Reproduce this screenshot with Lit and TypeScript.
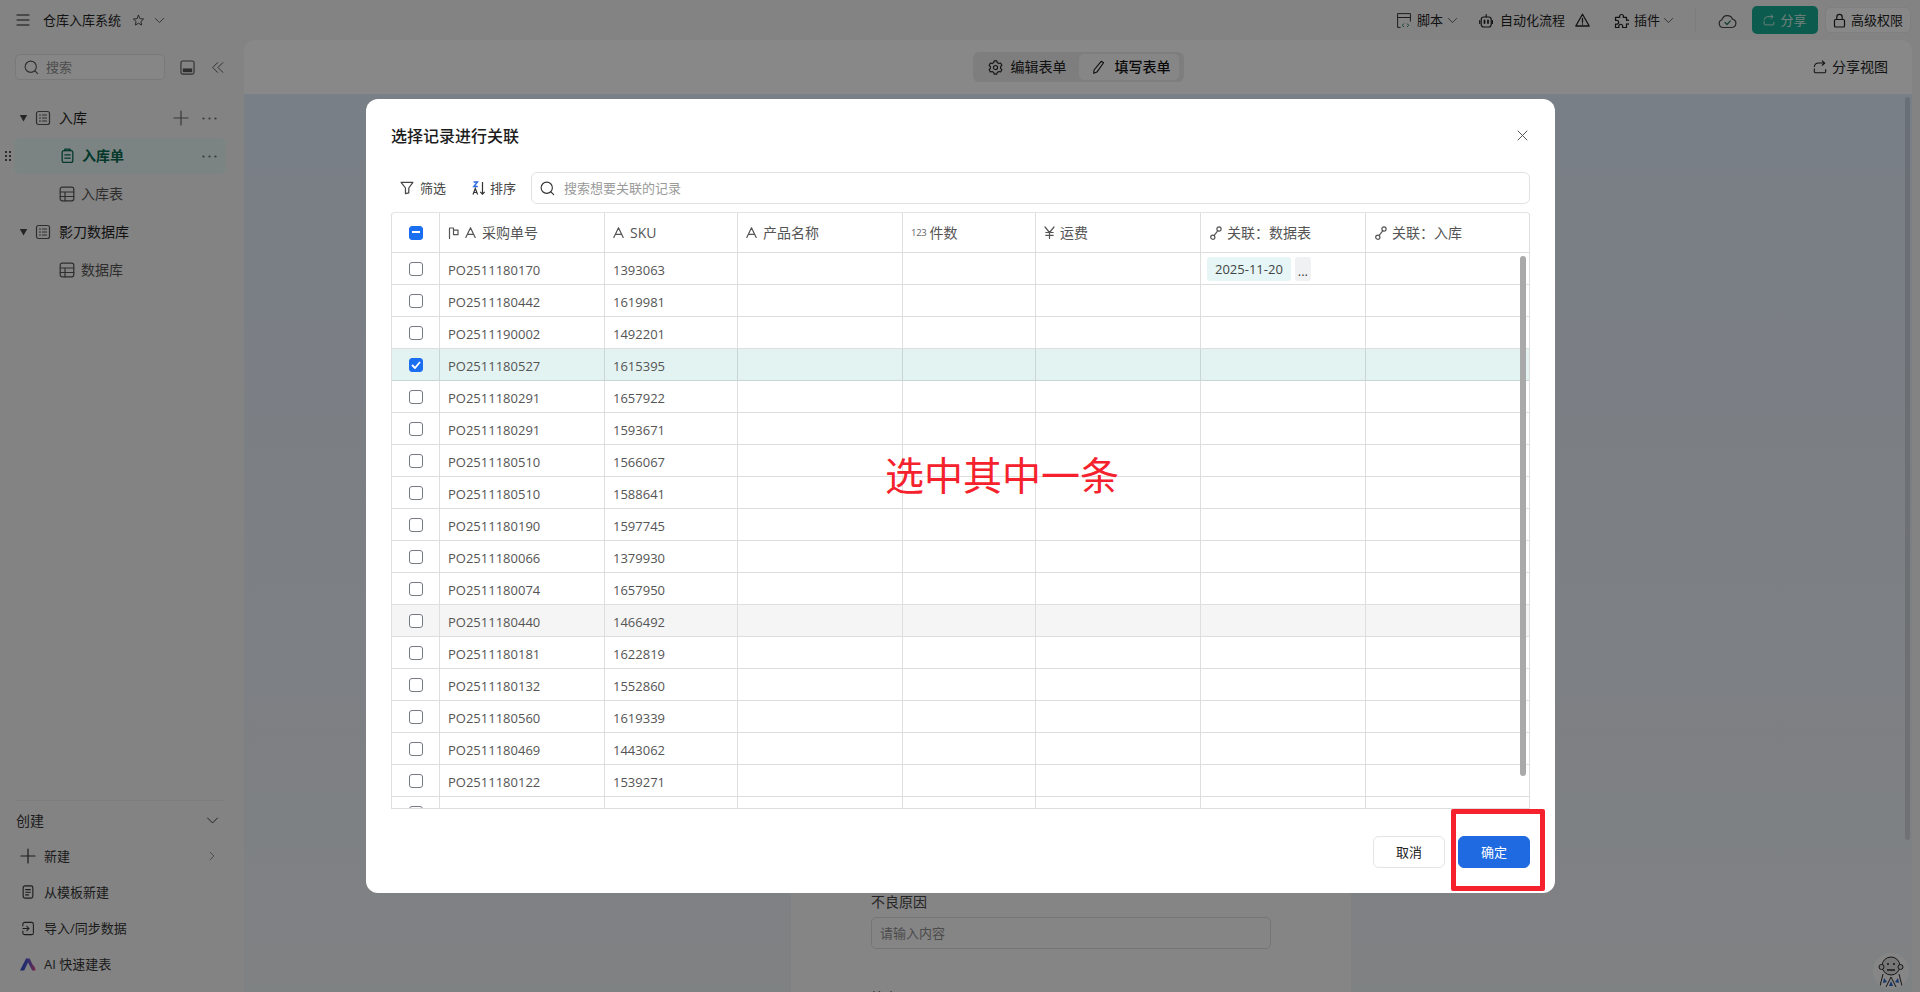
import { LitElement, html, svg, css } from "lit";
import { customElement } from "lit/decorators.js";

const ic = (w: number, h: number, body: unknown, vb = "0 0 16 16") =>
  html`<svg class="ic" width=${w} height=${h} viewBox=${vb} fill="none" stroke="currentColor" stroke-width="1.2" stroke-linecap="round" stroke-linejoin="round">${body}</svg>`;

const gearPath = (() => {
  const pts: string[] = [];
  const teeth = 6;
  for (let i = 0; i < teeth; i++) {
    const a = (i * Math.PI * 2) / teeth - Math.PI / 2;
    const step = Math.PI / teeth;
    const p = (r: number, t: number) => `${(8 + r * Math.cos(t)).toFixed(2)} ${(8 + r * Math.sin(t)).toFixed(2)}`;
    pts.push(p(7.2, a - step * 0.38), p(7.2, a + step * 0.38), p(5.6, a + step * 0.62), p(5.6, a + step * 1.38));
  }
  return `M${pts.join("L")}z`;
})();

const I = {
  menu: () => ic(14, 12, svg`<path d="M1 1h12M1 6h12M1 11h12" />`, "0 0 14 12"),
  star: () => ic(13, 13, svg`<path d="M8 1.6l1.9 4.1 4.4.5-3.3 3 .9 4.4L8 11.4l-3.9 2.2.9-4.400-3.300-3 4.400-.5z" />`),
  chevD: (s = 11) => ic(s, s, svg`<path d="M2 5l6 6 6-6" />`),
  chevR: () => ic(10, 10, svg`<path d="M5 2l6 6-6 6" />`),
  search: (s = 15) => ic(s, s, svg`<circle cx="7.2" cy="7.2" r="6" /><path d="M11.6 11.6l3 3" />`),
  panel: () => ic(15, 15, svg`<rect x="1" y="1" width="14" height="14" rx="2" /><rect x="3" y="9" width="10" height="4" fill="currentColor" stroke="none" />`),
  collapse: () => ic(14, 13, svg`<path d="M7.5 2L1.5 8l6 6M14 2L8 8l6 6" />`),
  tri: () => html`<svg class="ic" width="9" height="8" viewBox="0 0 9 8"><path d="M.8 1h7.4L4.5 7.4z" fill="#444" /></svg>`,
  doc: () => ic(16, 16, svg`<rect x="1.5" y="1.5" width="13" height="13" rx="2" /><path d="M4.5 5h1M7.5 5h4M4.5 8h1M7.5 8h4M4.5 11h1M7.5 11h4" />`),
  plus: () => ic(16, 16, svg`<path d="M8 1v14M1 8h14" />`),
  dots: () => html`<svg class="ic" width="15" height="3" viewBox="0 0 15 3" fill="currentColor"><circle cx="1.5" cy="1.5" r="1.1" /><circle cx="7.5" cy="1.5" r="1.1" /><circle cx="13.5" cy="1.5" r="1.1" /></svg>`,
  clip: () => ic(13, 16, svg`<rect x="1" y="2.5" width="10" height="11" rx="1.8" /><path d="M3.5 2.5V1h5v1.5M3.5 6.5h5M3.5 9.5h5" />`, "0 0 12 15"),
  grid: () => ic(16, 16, svg`<rect x="1.2" y="1.2" width="13.6" height="13.6" rx="2" /><path d="M1.2 6h13.6M1.2 10.500h13.600M6 6v8.800" />`),
  tpl: () => ic(12, 14, svg`<rect x=".8" y="1" width="10.4" height="13" rx="2" /><path d="M3.5 5h5M3.5 7.8h5M3.5 10.6h3" />`, "0 0 12 15"),
  imp: () => ic(14, 15, svg`<path d="M1 5V3a2 2 0 012-2h8a2 2 0 012 2v10a2 2 0 01-2 2H3a2 2 0 01-2-2v-2M1 8h7M5.500 5.500L8 8l-2.500 2.500" />`),
  ai: () => html`<svg class="ic" width="16" height="13" viewBox="0 0 16 13"><defs><linearGradient id="aig" x1="0" x2="1" y1="0" y2="0"><stop offset="0" stop-color="#2f49c8" /><stop offset=".55" stop-color="#5a55c9" /><stop offset="1" stop-color="#e0477e" /></linearGradient></defs><path d="M0 12.6L6 .6h3.6L13 7.2c1.3.4 2.3 2.4 2.6 5.4h-3.4L8 4.6 4.2 12.6z" fill="url(#aig)" /></svg>`,
  script: () => html`<svg class="ic" width="14" height="15" viewBox="0 0 14 15" fill="none" stroke-width="1"><path d="M.6 14.4V.6h12.8v8M.6 4.5h12.8M.6 14.4h3" stroke="#333" /><path d="M7 10.5L5.3 12.3 7 14M10 10.5l1.7 1.8L10 14" stroke="#2f7a55" /></svg>`,
  robot: () => ic(14, 15, svg`<rect x="2.2" y="4" width="10" height="10" rx="2.5" /><path d="M7.2 4V1.5M.7 7.5v3M13.5 7.5v3" /><path d="M5.5 7.5V10M9 7.5V10" stroke-width="1.8" />`, "0 0 14 15"),
  warn: () => ic(15, 14, svg`<path d="M7.5 1.2L14.2 13H.8zM7.5 5.5v3.800M7.500 10.800v.4" stroke-width="1.3" />`, "0 0 15 14"),
  puzzle: () => ic(15, 15, svg`<path d="M5.5 3.5a2 2 0 114 0l-.3.8h3.3v3l.9-.2a2 2 0 110 3.900l-.9-.2v3.700H8.500l.2-.8a2 2 0 10-3.900 0l.2.8H1.500v-3.500l.8.200a2 2 0 100-3.900l-.8.200V4.300h4.300z" />`, "0 0 15 15"),
  cloud: () => ic(19, 17, svg`<path d="M5 15.500a4 4 0 01-1-7.800 5.500 5.500 0 0110.500-.5 4.200 4.200 0 01-.500 8.300z" /><path d="M7 10.500l2 2 3.300-3.500" stroke="#2d7a58" />`, "0 0 19 17"),
  share: (s = 14) => ic(s, s, svg`<path d="M1.500 10v3.500a1 1 0 001 1h11a1 1 0 001-1V11M1.500 7.500A5 5 0 016.500 3.500h6.500M10.500 1L13.500 3.500 10.500 6" />`),
  lock: () => ic(13, 15, svg`<rect x="1.500" y="6.500" width="10" height="7.500" rx="1" /><path d="M3.800 6.500V4a2.700 2.700 0 015.400 0v2.500" />`, "0 0 13 15"),
  gear: () => ic(15, 15, svg`<path d=${gearPath} /><circle cx="8" cy="8" r="2.200" />`),
  pencil: () => ic(14, 16, svg`<path d="M10.500 1.500l2.700 1.600-7.600 10.700-3.600 1.500.3-3.900z" />`),
  close: () => ic(11, 11, svg`<path d="M1 1l9 9M10 1l-9 9" stroke-width="1" />`, "0 0 11 11"),
  filter: () => ic(14, 14, svg`<path d="M1 1.500h13.500L9.800 8v5.500l-3.800 1V8z" stroke-width="1.400" />`, "0 0 15.500 16"),
  sort: () => html`<svg class="ic" width="14" height="14" viewBox="0 0 14 14" fill="none"><path d="M1.500 1h4L1.800 5.500h4" stroke="#2a6be0" stroke-width="1.400" /><path d="M1 13.500l2.300-6 2.300 6M1.800 11.500h3" stroke="#333" stroke-width="1.200" /><path d="M10.500 1v12M8.300 10.800l2.200 2.400 2.200-2.400" stroke="#333" stroke-width="1.200" /></svg>`,
  flag: () => ic(11, 12, svg`<path d="M1.500 11.500V1h4v2.200h4.500v4.500H5.500V1" />`, "0 0 11 12"),
  letter: () => ic(11, 11, svg`<path d="M.8 10.500L5.500.8l4.700 9.700M2.500 7.300h6" />`, "0 0 11 11"),
  yen: () => ic(11, 13, svg`<path d="M1 1l4.500 5.500L10 1M5.500 6.500V12.500M1.800 6.500h7.400M1.800 9.300h7.400" />`, "0 0 11 13"),
  link: () => ic(12, 14, svg`<circle cx="2.800" cy="11.200" r="2.100" /><circle cx="9" cy="3" r="2.100" /><path d="M4 9.600L7.900 4.700" />`, "0 0 12 14"),
  grip: () => html`<svg class="ic" width="6" height="10" viewBox="0 0 6 10" fill="#555"><rect width="2" height="2" /><rect x="4" width="2" height="2" /><rect y="4" width="2" height="2" /><rect x="4" y="4" width="2" height="2" /><rect y="8" width="2" height="2" /><rect x="4" y="8" width="2" height="2" /></svg>`,
  mascot: () => html`<svg width="36" height="36" viewBox="0 0 36 36" fill="none" stroke="#2a2a2a" stroke-width="1"><circle cx="18" cy="13" r="9" fill="#d9d9d9" /><circle cx="8.500" cy="14" r="2.500" fill="#d9d9d9" /><circle cx="27.500" cy="14" r="2.500" fill="#d9d9d9" /><circle cx="15" cy="11" r="1" fill="#222" stroke="none" /><circle cx="21" cy="11" r="1" fill="#222" stroke="none" /><path d="M14 17h8" stroke-width="1.400" /><path d="M10 21l-3 12M26 21l3 12M18 24l-5 10M18 24l5 10" /><path d="M11 25l3 4-4 1zM25 25l-3 4 4 1z" fill="#2b5fc4" stroke="none" /><path d="M18 28l2 5h-4z" fill="#2b5fc4" stroke="none" /></svg>`,
};

const ROWS: [string, string][] = [
  ["PO2511180170", "1393063"], ["PO2511180442", "1619981"], ["PO2511190002", "1492201"],
  ["PO2511180527", "1615395"], ["PO2511180291", "1657922"], ["PO2511180291", "1593671"],
  ["PO2511180510", "1566067"], ["PO2511180510", "1588641"], ["PO2511180190", "1597745"],
  ["PO2511180066", "1379930"], ["PO2511180074", "1657950"], ["PO2511180440", "1466492"],
  ["PO2511180181", "1622819"], ["PO2511180132", "1552860"], ["PO2511180560", "1619339"],
  ["PO2511180469", "1443062"], ["PO2511180122", "1539271"], ["", ""],
];

@customElement("app-root")
export class AppRoot extends LitElement {
  static styles = css`
    :host { display: block; width: 1920px; height: 992px; overflow: hidden; position: relative;
      font-family: "Open Sans", "Noto Sans CJK SC", sans-serif; font-size: 13px; color: #333; background: #efefef; }
    * { box-sizing: border-box; }
    .ic { display: block; flex: none; }
    .t { display: block; padding-bottom: 2px; }
    .top { height: 40px; display: flex; align-items: center; padding: 0 9px 0 16px; color: #222; }
    .top .menu { margin-right: 13px; }
    .top .star { margin: 0 10px 0 11px; color: #444; }
    .top .chev { color: #444; margin: 0 -1px; }
    .spacer { flex: 1; }
    .tgroup { display: flex; align-items: center; }
    .tgroup.script { gap: 6px; margin-right: 22px; }
    .tgroup.script .chev { margin-left: -2px; }
    .tgroup.robot { gap: 7px; margin-right: 24px; }
    .tgroup.robot .warn { margin-left: 3px; }
    .tgroup.plug { gap: 5px; }
    .tgroup.plug .chev { margin-left: -2px; }
    .tdiv { width: 1px; height: 24px; background: #e2e2e2; margin: 0 22px; }
    .cloud { color: #444; margin-right: 15px; }
    .sharebtn { width: 66px; height: 28px; border-radius: 5px; background: #14a78e; color: #cfe9e2; display: flex; align-items: center; justify-content: center; gap: 5px; margin-right: 7px; }
    .perm { width: 86px; height: 26px; border-radius: 5px; background: #f7f7f7; border: 1px solid #e8e8e8; display: flex; align-items: center; justify-content: center; gap: 5px; color: #222; }
    .layout { display: flex; height: 952px; }
    .side { width: 244px; flex: none; display: flex; flex-direction: column; }
    .sidehead { display: flex; align-items: center; padding: 14px 0 0 15px; }
    .searchbox { width: 150px; height: 26px; border: 1px solid #dddddd; border-radius: 5px; background: #f5f5f5; display: flex; align-items: center; padding-left: 8px; gap: 7px; color: #555; }
    .searchbox .t { color: #8d8d8d; }
    .panel { margin-left: 15px; color: #555; }
    .coll { margin-left: 16px; color: #555; }
    .tree { margin-top: 20px; display: flex; flex-direction: column; gap: 2px; font-size: 14px; }
    .row { height: 36px; display: flex; align-items: center; position: relative; margin: 0 18px 0 14px; color: #222; }
    .row.group { padding-left: 5px; }
    .row.group .tri { margin-right: 7px; }
    .row.group .doc { margin-right: 8px; color: #555; }
    .row.leaf { padding-left: 45px; color: #555; gap: 6px; }
    .row.active { background: #e1f1ee; border-radius: 6px; color: #06664f; font-weight: 600; padding-left: 47px; }
    .row.active > .clip { margin-right: 8px; }
    .row .acts { margin-left: auto; display: flex; align-items: center; gap: 13px; color: #666; padding-right: 9px; }
    .grip { position: absolute; left: -9px; top: 13px; }
    .create { margin-top: auto; padding: 0 20px 10px 16px; }
    .create .chead { border-top: 1px solid #e4e4e4; height: 38px; display: flex; align-items: center; justify-content: space-between; font-size: 14px; padding: 2px 5px 0 0; color: #333; }
    .citem { height: 36px; display: flex; align-items: center; color: #333; }
    .citem .cic { width: 28px; padding-left: 4px; color: #333; display: flex; }
    .citem .more { margin-left: auto; margin-right: 7px; color: #666; }
    .citem .cic.tp { padding-left: 6px; }
    .citem .cic.im { padding-left: 6px; }
    .main { width: 1668px; flex: none; border-radius: 10px 10px 0 0; overflow: hidden; display: flex; flex-direction: column; position: relative; background: linear-gradient(180deg, #dce7f5 0%, #e3e9f0 60%, #e8edef 100%); }
    .mhead { height: 54px; flex: none; background: #f8f8f8; display: grid; grid-template-columns: 1fr auto 1fr; align-items: center; font-size: 14px; color: #222; }
    .seg { grid-column: 2; display: flex; height: 30px; width: 211px; background: #e6e6e6; border-radius: 6px; padding: 2px 5px 2px 0; }
    .seg > div { display: flex; align-items: center; border-radius: 5px; }
    .seg .edit { width: 106px; padding-left: 15px; gap: 8px; }
    .seg .fill { width: 100px; padding-left: 13px; gap: 9px; background: #f5f5f5; font-weight: 500; color: #111; }
    .viewshare { grid-column: 3; justify-self: end; padding-right: 24px; display: flex; align-items: center; gap: 5px; }
    .mbody { flex: 1; min-height: 0; display: flex; justify-content: center; padding: 16px 14px 0 0; overflow: hidden; }
    .form { width: 560px; height: 1200px; flex: none; background: #f2f2f2; padding: 782px 80px 0; font-size: 14px; }
    .form .lbl { line-height: 20px; color: #444; }
    .form .inp { height: 32px; margin: 5px 0 39px; border: 1px solid #d6d6d6; border-radius: 5px; padding: 0 8px; display: flex; align-items: center; color: #8a8a8a; font-size: 13px; }
    .pagebar { position: absolute; right: 2px; top: 57px; bottom: 152px; width: 5px; background: rgba(0, 0, 0, .12); border-radius: 3px; }
    .mascot { position: absolute; left: 1873px; top: 953px; width: 36px; height: 36px; border-radius: 50%; background: #f4f4f4; overflow: hidden; }
    .overlay { position: absolute; inset: 0; background: rgba(0, 0, 0, .45); padding: 99px 0 0 1px; display: flex; justify-content: center; }
    .modal { width: 1189px; height: 794px; background: #fff; border-radius: 12px; padding: 0 25px; position: relative; display: flex; flex-direction: column; }
    .mtitle { height: 73px; flex: none; display: flex; align-items: center; justify-content: space-between; font-size: 16px; font-weight: 500; color: #1c1c1c; }
    .mtitle .ic { color: #555; margin-right: 2px; }
    .tools { height: 32px; flex: none; display: flex; align-items: center; color: #444; }
    .tbtn { display: flex; align-items: center; gap: 6px; padding-left: 9px; width: 72px; }
    .tbtn.f2 { width: 68px; gap: 4px; }
    .tsearch { flex: 1; height: 32px; border: 1px solid #e2e2e2; border-radius: 6px; display: flex; align-items: center; padding-left: 8px; gap: 9px; color: #333; }
    .tsearch .t { color: #9a9a9a; }
    .table { margin-top: 8px; height: 597px; flex: none; border: 1px solid #dedede; border-top-color: #e4e4e4; border-radius: 4px 4px 0 0; overflow: hidden; position: relative; width: 1139px; }
    .tr { display: grid; grid-template-columns: 48px 165px 133px 165px 133px 165px 165px 164px; height: 32px; }
    .tr > div { border-right: 1px solid #dedede; border-bottom: 1px solid #dedede; display: flex; align-items: center; padding-left: 8px; color: #555; padding-top: 3px; min-width: 0; }
    .tr.head { height: 40px; }
    .tr.head > div { padding-top: 0; gap: 6px; font-size: 14px; }
    .tr.head > div > span:last-child { padding-bottom: 1px; }
    .tr > div:first-child { padding: 0 0 0 17px; }
    .tr.sel { background: #e3f3f2; }
    .tr.sel > div { border-color: #c8d6d6; }
    .tr.hov { background: #f5f5f5; }
    .cb { width: 14px; height: 14px; border: 1px solid #757a80; border-radius: 3px; background: #fff; display: flex; align-items: center; justify-content: center; flex: none; }
    .cb.on { background: #1a6ff0; border-color: #1a6ff0; }
    .cb svg { display: block; }
    .num { font-size: 9.5px; color: #666; margin-right: -1px; letter-spacing: -.3px; }
    .tr.head .c4 { gap: 4px; }
    .tr.head .yen { gap: 5px; }
    .tr.head .lk { gap: 5px; padding-left: 9px; }
    .tags { gap: 4px; padding: 0 0 0 6px !important; }
    .tag { height: 24px; background: #e6f6f6; border-radius: 3px; padding: 0 8px; display: flex; align-items: center; color: #444; }
    .tag.more { width: 16px; padding: 0 0 5px; justify-content: center; background: #f0f1f3; align-items: flex-end; line-height: 10px; }
    .tbar { position: absolute; left: 1128px; top: 43px; width: 6px; height: 520px; border-radius: 3px; background: #a9a9a9; }
    .foot { flex: 1; display: flex; justify-content: flex-end; align-items: flex-start; gap: 13px; padding-top: 27px; }
    .btn { width: 72px; height: 32px; border-radius: 6px; display: flex; align-items: center; justify-content: center; border: 1px solid #e4e4e4; color: #222; }
    .btn.pri { background: #1f6ae1; border-color: #1f6ae1; color: #fff; }
    .note { position: absolute; left: 519px; top: 345px; font-size: 39px; line-height: 58px; color: #f5222d; white-space: nowrap; font-family: "Noto Sans CJK SC", sans-serif; }
    .redbox { position: absolute; left: 1085px; top: 710px; width: 94px; height: 82px; border: 5px solid #f5222d; border-radius: 2px; }
  `;

  private cell(text: string) {
    return html`<div>${text}</div>`;
  }

  render() {
    return html`
      <div class="top">
        <span class="menu">${I.menu()}</span>
        <span class="t">仓库入库系统</span>
        <span class="star">${I.star()}</span>
        <span class="chev">${I.chevD()}</span>
        <div class="spacer"></div>
        <div class="tgroup script">${I.script()}<span class="t">脚本</span><span class="chev">${I.chevD()}</span></div>
        <div class="tgroup robot">${I.robot()}<span class="t">自动化流程</span><span class="warn">${I.warn()}</span></div>
        <div class="tgroup plug">${I.puzzle()}<span class="t">插件</span><span class="chev">${I.chevD()}</span></div>
        <div class="tdiv"></div>
        <span class="cloud">${I.cloud()}</span>
        <div class="sharebtn">${I.share(12)}<span class="t">分享</span></div>
        <div class="perm">${I.lock()}<span class="t">高级权限</span></div>
      </div>
      <div class="layout">
        <aside class="side">
          <div class="sidehead">
            <div class="searchbox">${I.search()}<span class="t">搜索</span></div>
            <span class="panel">${I.panel()}</span>
            <span class="coll">${I.collapse()}</span>
          </div>
          <div class="tree">
            <div class="row group"><span class="tri">${I.tri()}</span><span class="doc">${I.doc()}</span><span class="t">入库</span>
              <span class="acts">${I.plus()}${I.dots()}</span></div>
            <div class="row active"><span class="grip">${I.grip()}</span><span class="clip">${I.clip()}</span><span class="t">入库单</span>
              <span class="acts">${I.dots()}</span></div>
            <div class="row leaf">${I.grid()}<span class="t">入库表</span></div>
            <div class="row group"><span class="tri">${I.tri()}</span><span class="doc">${I.doc()}</span><span class="t">影刀数据库</span></div>
            <div class="row leaf">${I.grid()}<span class="t">数据库</span></div>
          </div>
          <div class="create">
            <div class="chead"><span class="t">创建</span>${I.chevD(13)}</div>
            <div class="citem"><span class="cic">${I.plus()}</span><span class="t">新建</span><span class="more">${I.chevR()}</span></div>
            <div class="citem"><span class="cic tp">${I.tpl()}</span><span class="t">从模板新建</span></div>
            <div class="citem"><span class="cic im">${I.imp()}</span><span class="t">导入/同步数据</span></div>
            <div class="citem ai"><span class="cic">${I.ai()}</span><span class="t">AI 快速建表</span></div>
          </div>
        </aside>
        <main class="main">
          <div class="mhead">
            <div class="seg">
              <div class="edit">${I.gear()}<span class="t">编辑表单</span></div>
              <div class="fill">${I.pencil()}<span class="t">填写表单</span></div>
            </div>
            <div class="viewshare">${I.share()}<span class="t">分享视图</span></div>
          </div>
          <div class="mbody">
            <div class="form">
              <div class="lbl">不良原因</div>
              <div class="inp"><span class="t">请输入内容</span></div>
              <div class="lbl">签名</div>
            </div>
          </div>
          <div class="pagebar"></div>
        </main>
      </div>
      <div class="mascot">${I.mascot()}</div>
      <div class="overlay">
        <div class="modal">
          <div class="mtitle"><span class="t">选择记录进行关联</span>${I.close()}</div>
          <div class="tools">
            <div class="tbtn">${I.filter()}<span class="t">筛选</span></div>
            <div class="tbtn f2">${I.sort()}<span class="t">排序</span></div>
            <div class="tsearch">${I.search(15)}<span class="t">搜索想要关联的记录</span></div>
          </div>
          <div class="table">
            <div class="tr head">
              <div><span class="cb on"><svg width="8" height="2" viewBox="0 0 8 2"><rect width="8" height="2" fill="#fff" /></svg></span></div>
              <div>${I.flag()}${I.letter()}<span>采购单号</span></div>
              <div>${I.letter()}<span>SKU</span></div>
              <div>${I.letter()}<span>产品名称</span></div>
              <div class="c4"><span class="num">123</span><span>件数</span></div>
              <div class="yen">${I.yen()}<span>运费</span></div>
              <div class="lk">${I.link()}<span>关联：数据表</span></div>
              <div class="lk">${I.link()}<span>关联：入库</span></div>
            </div>
            ${ROWS.map(([po, sku], i) => html`
              <div class="tr ${i === 3 ? "sel" : i === 11 ? "hov" : ""}">
                <div><span class="cb ${i === 3 ? "on" : ""}">${i === 3 ? html`<svg width="10" height="8" viewBox="0 0 10 8" fill="none"><path d="M1 4l3 3 5-6" stroke="#fff" stroke-width="1.8" /></svg>` : ""}</span></div>
                ${this.cell(po)}${this.cell(sku)}${this.cell("")}${this.cell("")}${this.cell("")}
                ${i === 0 ? html`<div class="tags"><span class="tag">2025-11-20</span><span class="tag more">...</span></div>` : this.cell("")}
                ${this.cell("")}
              </div>`)}
            <div class="tbar"></div>
          </div>
          <div class="foot">
            <div class="btn"><span class="t">取消</span></div>
            <div class="btn pri"><span class="t">确定</span></div>
          </div>
          <div class="note">选中其中一条</div>
          <div class="redbox"></div>
        </div>
      </div>
    `;
  }
}
